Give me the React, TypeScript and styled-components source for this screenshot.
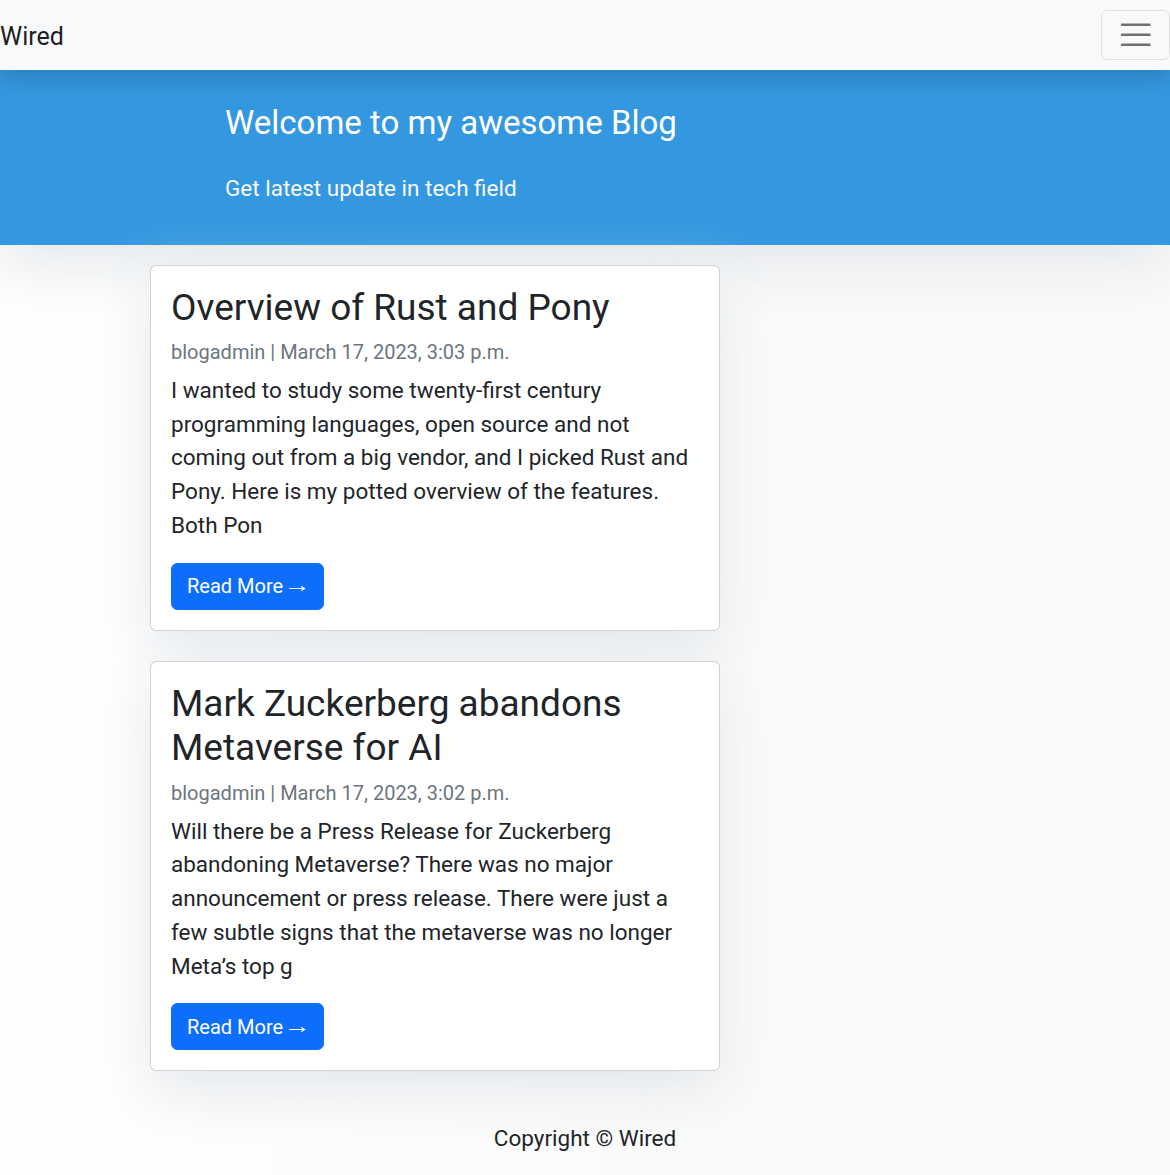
import React from "react";
import styled, { createGlobalStyle } from "styled-components";

const Global = createGlobalStyle`
  * { box-sizing: border-box; }
  html, body { margin: 0; padding: 0; }
  body {
    font-family: Roboto, "Liberation Sans", sans-serif;
    font-size: 22.5px;
    line-height: 1.5;
    color: #212529;
    background: linear-gradient(90deg, #fefefe 0px, #fefefe 110px, #fafafa 760px, #fafafa 100%);
    -webkit-font-smoothing: antialiased;
  }
`;

const Navbar = styled.nav`
  position: relative;
  display: flex;
  align-items: center;
  justify-content: space-between;
  padding: 10px 0;
  background: #f8f9fa;
  box-shadow: 0 10px 20px rgba(0, 0, 0, 0.15);
`;

const Brand = styled.a`
  font-size: 25px;
  line-height: 1.5;
  padding: 7.5px 0 5px;
  color: rgba(0, 0, 0, 0.9);
  text-decoration: none;
`;

const Toggler = styled.button`
  display: flex;
  align-items: center;
  justify-content: center;
  padding: 5px 15px;
  background: transparent;
  border: 1.25px solid rgba(0, 0, 0, 0.1);
  border-radius: 6.25px;
  cursor: pointer;
  svg { display: block; width: 37.5px; height: 37.5px; }
`;

const Masthead = styled.header`
  background: #3498e0;
  padding: 12.5px 0 18.75px;
  box-shadow: 0 20px 60px #e3e7eb;
`;

const HeadInner = styled.div`
  max-width: 720px;
  margin: 0 auto;
`;

const SiteTitle = styled.h3`
  margin: 20px 0 30px;
  font-size: 33px;
  font-weight: 400;
  line-height: 1.2;
  color: #fff;
`;

const SiteLead = styled.p`
  margin: 0 0 20px;
  color: #f8f9fa;
`;

const Container = styled.main`
  max-width: 870px;
  margin: 0 auto;
`;

const Column = styled.div`
  width: 570px;
  margin-top: 20px;
`;

const Card = styled.article`
  background: #fff;
  border: 1.25px solid rgba(0, 0, 0, 0.175);
  border-radius: 6.25px;
  box-shadow: 0 20px 60px #e3e7eb;
  margin-bottom: 30px;
`;

const CardBody = styled.div`
  padding: 20px;
`;

const CardTitle = styled.h2`
  margin: 0 0 10px;
  font-size: 37px;
  font-weight: 400;
  line-height: 1.2;
`;

const Meta = styled.p`
  margin: 0 0 10px;
  font-size: 20px;
  line-height: 1.2;
  color: #6c757d;
`;

const Excerpt = styled.p`
  margin: 0 0 20px;
`;

const Button = styled.a`
  display: inline-block;
  padding: 7.5px 15px;
  font-size: 20px;
  line-height: 1.5;
  color: #fff;
  background: #0d6efd;
  border: 1.25px solid #0d6efd;
  border-radius: 6.25px;
  text-decoration: none;
`;

const Arrow = styled.span`
  display: inline-block;
  margin: 0 4px 0 1px;
  transform: translateY(-2px) scale(1.35, 1.1);
  transform-origin: left center;
`;

const Footer = styled.footer`
  padding: 21px 0 20px;
  p {
    margin: 0;
    text-align: center;
    color: #212529;
  }
`;

const posts = [
  {
    title: "Overview of Rust and Pony",
    meta: "blogadmin | March 17, 2023, 3:03 p.m.",
    text:
      "I wanted to study some twenty-first century programming languages, open source and not coming out from a big vendor, and I picked Rust and Pony. Here is my potted overview of the features. Both Pon",
  },
  {
    title: "Mark Zuckerberg abandons Metaverse for AI",
    meta: "blogadmin | March 17, 2023, 3:02 p.m.",
    text:
      "Will there be a Press Release for Zuckerberg abandoning Metaverse? There was no major announcement or press release. There were just a few subtle signs that the metaverse was no longer Meta\u2019s top g",
  },
];

export default function App() {
  return (
    <>
      <Global />
      <Navbar>
        <Brand href="#">Wired</Brand>
        <Toggler aria-label="Toggle navigation">
          <svg viewBox="0 0 30 30">
            <path
              d="M4 7h22M4 15h22M4 23h22"
              stroke="rgba(0,0,0,0.55)"
              strokeWidth="2"
              strokeLinecap="round"
              strokeMiterlimit="10"
            />
          </svg>
        </Toggler>
      </Navbar>
      <Masthead>
        <HeadInner>
          <SiteTitle>Welcome to my awesome Blog</SiteTitle>
          <SiteLead>Get latest update in tech field</SiteLead>
        </HeadInner>
      </Masthead>
      <Container>
        <Column>
          {posts.map((p) => (
            <Card key={p.title}>
              <CardBody>
                <CardTitle>{p.title}</CardTitle>
                <Meta>{p.meta}</Meta>
                <Excerpt>{p.text}</Excerpt>
                <Button href="#">
                  Read More<Arrow>&rarr;</Arrow>
                </Button>
              </CardBody>
            </Card>
          ))}
        </Column>
      </Container>
      <Footer>
        <p>Copyright &copy; Wired</p>
      </Footer>
    </>
  );
}
